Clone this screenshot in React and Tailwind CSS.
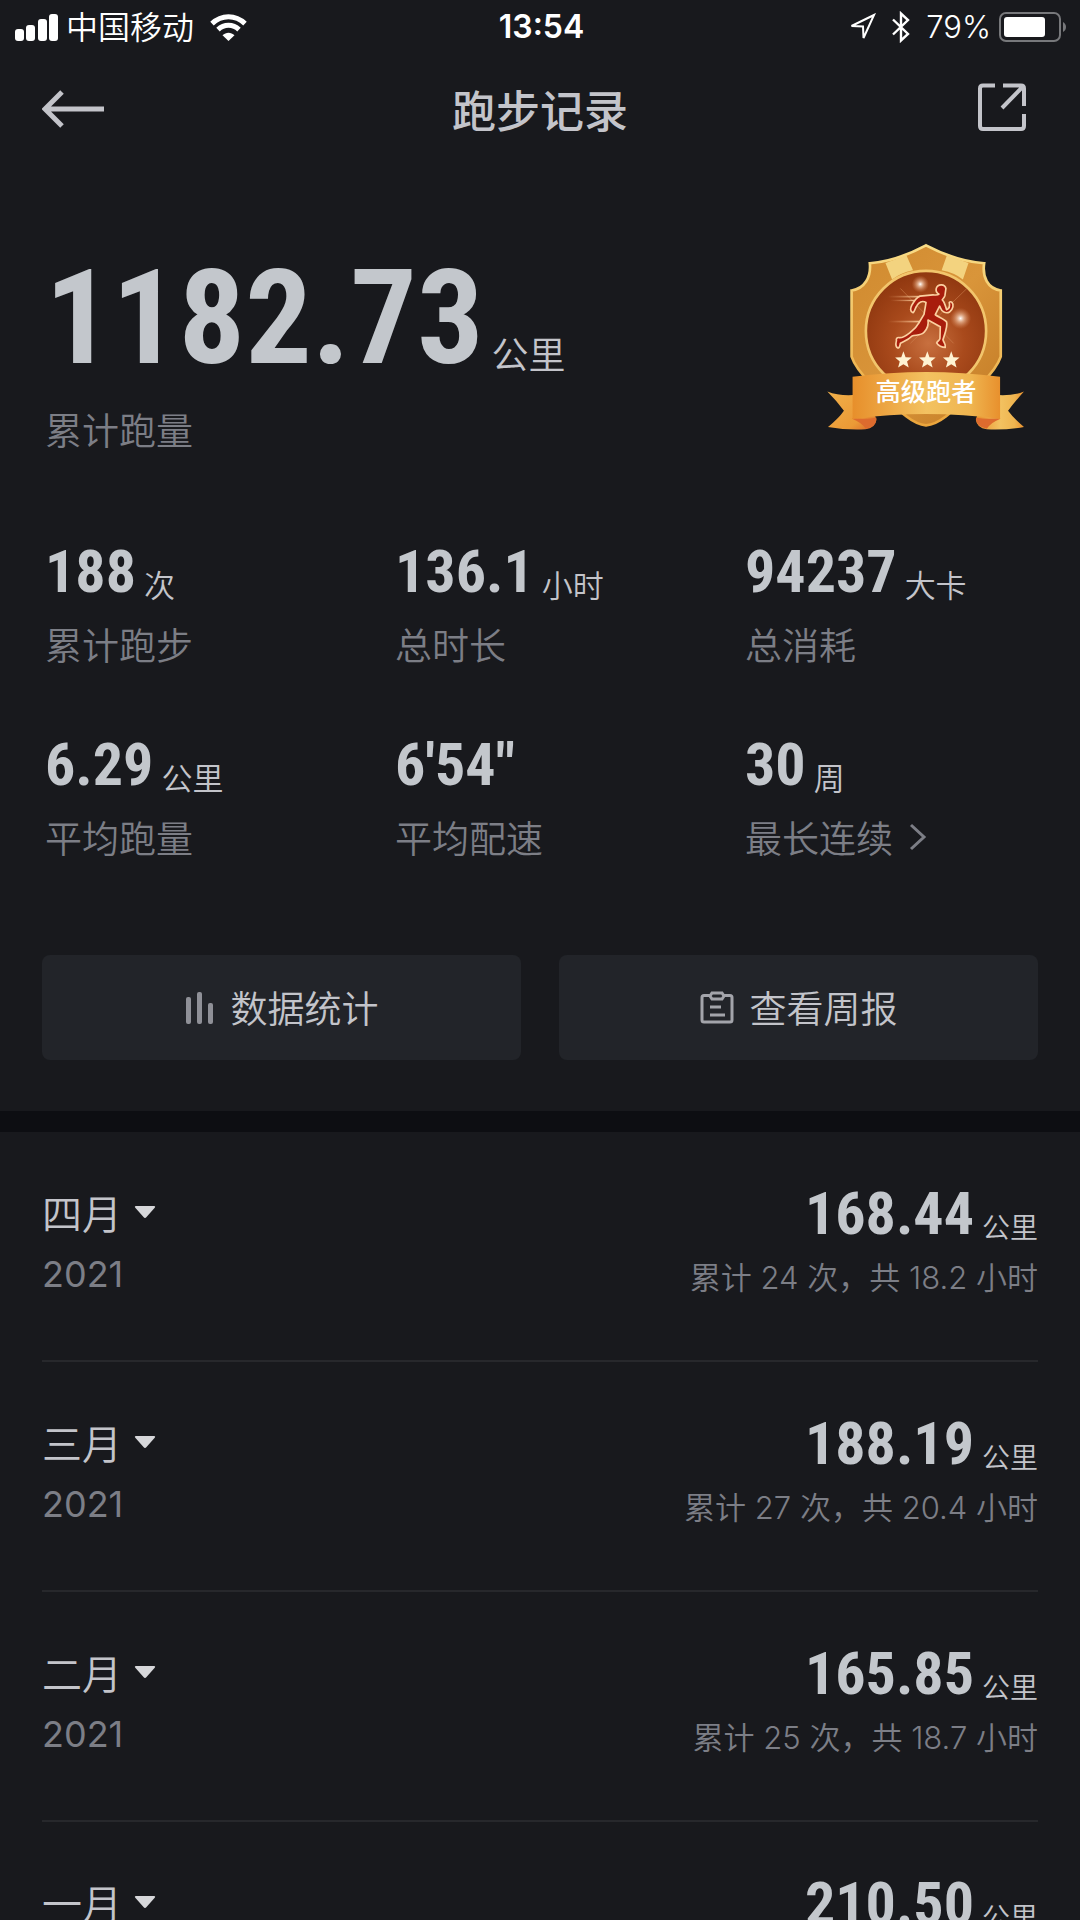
const STATS = [
  { id: 'runs', value: '188', unit: '次', label: '累计跑步' },
  { id: 'time', value: '136.1', unit: '小时', label: '总时长' },
  { id: 'burn', value: '94237', unit: '大卡', label: '总消耗' },
  { id: 'avg', value: '6.29', unit: '公里', label: '平均跑量' },
  { id: 'pace', value: '6′54″', unit: '', label: '平均配速' },
  { id: 'streak', value: '30', unit: '周', label: '最长连续', link: true },
];

const MONTHS = [
  { name: '四月', year: 2021, distance: '168.44', runs: 24, hours: '18.2' },
  { name: '三月', year: 2021, distance: '188.19', runs: 27, hours: '20.4' },
  { name: '二月', year: 2021, distance: '165.85', runs: 25, hours: '18.7' },
  { name: '一月', year: 2021, distance: '210.50' },
];

const NUM = "font-['Roboto_Condensed','Roboto',sans-serif] font-bold text-[#c3c7cc]";
const LABEL = 'text-[37px] leading-[48px] font-[350] text-[#7c7e86]';

function StatusBar() {
  return (
    <div className="grid h-[54px] grid-cols-[1fr_auto_1fr] items-center pr-3 pl-[15px] text-white">
      <div className="flex items-center">
        <svg width="43" height="27" viewBox="0 0 43 27" fill="currentColor">
          <rect x="0" y="15" width="9" height="12" rx="3" />
          <rect x="11" y="11" width="9" height="16" rx="3" />
          <rect x="23" y="5" width="9" height="22" rx="3" />
          <rect x="34" y="0" width="9" height="27" rx="3" />
        </svg>
        <span className="ml-2 pb-1 text-[32px] leading-[40px] font-[350]">中国移动</span>
        <svg className="ml-4" width="37" height="27" viewBox="0 0 37 27" fill="none" stroke="currentColor" strokeWidth="5">
          <path d="M2 9.6C11.500 .4 25.500 .4 35 9.600" />
          <path d="M8 15.600C14 9.900 23 9.900 29 15.600" />
          <path d="M18.500 27L12.500 21.200C16 17.800 21 17.800 24.500 21.200Z" fill="currentColor" stroke="none" />
        </svg>
      </div>
      <span className="font-['Inter'] text-[32px] leading-[40px] font-semibold">13:54</span>
      <div className="flex items-center justify-end">
        <svg width="27" height="28" viewBox="0 0 27 28" fill="none" stroke="currentColor" strokeWidth="2">
          <path d="M25 2L2.500 13L14 13.500L14.500 25Z" strokeLinejoin="miter" />
        </svg>
        <svg className="ml-4" width="18" height="32" viewBox="0 0 18 32" fill="none" stroke="currentColor" strokeWidth="2.400">
          <path d="M1 8.500L16 23L9 29.500V2.500L16 9L1 23.500" />
        </svg>
        <span className="ml-4 font-['Inter'] text-[31px] leading-[40px] font-[350]">79%</span>
        <svg className="ml-2" width="69" height="30" viewBox="0 0 69 30">
          <rect x="1" y="1" width="60" height="28" rx="6" fill="none" stroke="#77787b" strokeWidth="2" />
          <rect x="5" y="5" width="41" height="20" rx="3" fill="#fff" />
          <path d="M64 10C68 12 68 18 64 20Z" fill="#77787b" />
        </svg>
      </div>
    </div>
  );
}

function Header() {
  return (
    <header className="grid h-[110px] grid-cols-[1fr_auto_1fr] items-center px-[42px] text-[#c3c4ca]">
      <button type="button" aria-label="返回" className="justify-self-start">
        <svg width="62" height="38" viewBox="0 0 62 38" fill="none" stroke="currentColor" strokeWidth="5">
          <path d="M20 2L3 19L20 36M3 19H62" />
        </svg>
      </button>
      <h1 className="text-[44px] leading-[60px] font-medium">跑步记录</h1>
      <button type="button" aria-label="分享" className="mr-3 justify-self-end pb-1">
        <svg width="48" height="48" viewBox="0 0 48 48" fill="none" stroke="currentColor" strokeWidth="4" strokeLinejoin="round">
          <path d="M17 2.500H5Q2 2.500 2 5.500V43Q2 46 5 46H43Q46 46 46 43V31" />
          <path d="M25 2.500H43Q46 2.500 46 5.500V23M45 3.500L24 25" />
        </svg>
      </button>
    </header>
  );
}

function Star({ x }) {
  return (
    <path
      transform={`translate(${x} 421)`}
      d="M0-27L6.500-9L25-8L11 3.500L16 22L0 12L-16 22L-11 3.500L-25-8L-6.500-9Z"
      fill="#fff3d2"
    />
  );
}

function Badge() {
  return (
    <svg className="h-[188px] w-[198px]" viewBox="79 69 596 564" role="img" aria-label="高级跑者">
      <defs>
        <linearGradient id="shield" x1="0" y1="0" x2="1" y2="1">
          <stop offset="0" stopColor="#d08a2f" />
          <stop offset=".5" stopColor="#d9953a" />
          <stop offset="1" stopColor="#c27a25" />
        </linearGradient>
        <linearGradient id="rim" x1="0" y1="0" x2="0" y2="1">
          <stop offset="0" stopColor="#f8dc86" />
          <stop offset="1" stopColor="#eba53c" />
        </linearGradient>
        <radialGradient id="disc" cx=".52" cy=".6" r=".6">
          <stop offset="0" stopColor="#c8703f" />
          <stop offset=".5" stopColor="#a94a1c" />
          <stop offset="1" stopColor="#8f370f" />
        </radialGradient>
        <linearGradient id="ribbon" x1="0" y1="0" x2="1" y2="0">
          <stop offset="0" stopColor="#e78f2b" />
          <stop offset=".5" stopColor="#f3c261" />
          <stop offset=".8" stopColor="#efb550" />
          <stop offset="1" stopColor="#e8902d" />
        </linearGradient>
        <linearGradient id="tail" x1="0" y1="0" x2="1" y2="1">
          <stop offset="0" stopColor="#f0b04a" />
          <stop offset=".7" stopColor="#eb9a36" />
          <stop offset="1" stopColor="#d9632a" />
        </linearGradient>
        <radialGradient id="glow">
          <stop offset="0" stopColor="#fff" />
          <stop offset=".35" stopColor="#f3c8a8" stopOpacity=".7" />
          <stop offset="1" stopColor="#d98a5a" stopOpacity="0" />
        </radialGradient>
        <linearGradient id="streak" x1="0" y1="0" x2="1" y2="0">
          <stop offset="0" stopColor="#e8a070" stopOpacity="0" />
          <stop offset="1" stopColor="#ffd9a8" />
        </linearGradient>
      </defs>
      <path
        d="M377 75C425 100 485 125 552 129C546 170 562 205 602 211V410C592 440 570 465 545 490C495 525 440 612 377 617C315 612 260 525 210 490C185 465 163 440 153 410V211C193 205 212 170 208 129C270 125 330 100 377 75Z"
        fill="url(#shield)"
        stroke="url(#rim)"
        strokeWidth="8"
      />
      <path d="M255 128L318 105L338 150Q300 158 275 178Z" fill="#f3d37f" />
      <path d="M505 128L440 105L424 150Q465 158 488 178Z" fill="#f3d37f" />
      <circle cx="377" cy="333" r="181" fill="url(#disc)" stroke="#f2c56c" strokeWidth="8" />
      <path d="M300 205L460 370M500 205L330 370" stroke="#d58a58" strokeWidth="3" opacity=".5" />
      <circle cx="360" cy="192" r="26" fill="url(#glow)" />
      <circle cx="481" cy="295" r="32" fill="url(#glow)" />
      <rect x="262" y="227" width="110" height="5" fill="url(#streak)" />
      <rect x="270" y="239" width="80" height="4" fill="url(#streak)" />
      <rect x="262" y="302" width="108" height="5" fill="url(#streak)" />
      <path
        d="M408 204C413 190 434 191 437 205L434 226C432 234 427 236 426 239C434 246 436 262 439 269C449 265 449 256 447 247C452 241 460 248 458 260C455 274 443 282 431 276C421 272 421 261 418 258L405 284C414 291 434 298 439 306C443 320 433 343 428 359C431 369 438 375 435 382C426 382 413 377 409 369C412 361 418 363 419 355L420 320L383 300C385 311 381 326 371 337C362 348 345 344 335 348C324 360 309 365 300 370C298 377 299 384 292 384C285 381 286 370 288 362C286 355 291 351 297 353C309 354 322 343 331 336C341 328 348 323 354 311L371 283C373 271 376 256 377 247C365 240 355 247 350 256C343 265 344 274 338 278C328 274 330 264 334 256C341 243 347 232 359 228L398 224C405 225 414 224 416 222C409 218 406 211 408 204Z"
        fill="#a81d0c"
        stroke="#fbd0a0"
        strokeWidth="5"
        strokeLinejoin="round"
      />
      <Star x={309} />
      <Star x={381} />
      <Star x={453} />
      <path d="M80 515Q130 535 200 520L228 600Q225 625 195 629Q140 632 82 622Q115 595 130 573Q110 545 80 515Z" fill="url(#tail)" />
      <path d="M672 515Q622 535 552 520L527 600Q530 625 560 629Q615 632 672 622Q640 595 624 573Q645 545 672 515Z" fill="url(#ribbon)" />
      <path d="M156 595Q190 600 228 594Q228 622 196 627Q180 607 156 598Z" fill="#dd6b2e" />
      <path d="M600 595Q565 600 527 594Q528 622 560 627Q575 607 600 598Z" fill="#dd6b2e" />
      <path d="M156 471Q377 441 600 471V598Q377 568 156 598Z" fill="url(#ribbon)" />
      <text x="377" y="543" textAnchor="middle" fontSize="76" fontWeight="500" fill="#fff">高级跑者</text>
    </svg>
  );
}

function Hero() {
  return (
    <section className="flex justify-between pt-[79px] pr-[55px] pl-[45px]">
      <div>
        <div className="flex items-end gap-2">
          <span className={`${NUM} text-[132px] leading-[150px]`}>1182.73</span>
          <span className="pb-4 text-[37px] leading-[48px] font-[350] text-[#c3c4ca]">公里</span>
        </div>
        <p className={`${LABEL} mt-3`}>累计跑量</p>
      </div>
      <Badge />
    </section>
  );
}

function Stat({ stat }) {
  return (
    <div>
      <div className="flex items-end gap-2">
        <span className={`${NUM} text-[60px] leading-[72px]`}>{stat.value}</span>
        {stat.unit && <span className="pb-1 text-[31px] leading-[40px] font-[350] text-[#c3c4ca]">{stat.unit}</span>}
      </div>
      {stat.link ? (
        <button type="button" className={`${LABEL} mt-3 flex items-center gap-4`}>
          {stat.label}
          <svg width="18" height="28" viewBox="0 0 18 28" fill="none" stroke="currentColor" strokeWidth="3">
            <path d="M2 2L15 14L2 26" />
          </svg>
        </button>
      ) : (
        <p className={`${LABEL} mt-3`}>{stat.label}</p>
      )}
    </div>
  );
}

function Actions() {
  const btn = 'flex h-[105px] items-center justify-center gap-4 rounded-lg bg-[#222429] text-[37px] font-[350] text-[#c3c4ca]';
  return (
    <div className="mt-[94px] grid grid-cols-2 gap-[38px] px-[42px]">
      <button type="button" className={btn}>
        <svg width="30" height="34" viewBox="0 0 30 34" fill="#8f9097">
          <rect x="1" y="6" width="5" height="27" rx="2" />
          <rect x="12" y="1" width="5" height="32" rx="2" />
          <rect x="23" y="12" width="5" height="21" rx="2" />
        </svg>
        数据统计
      </button>
      <button type="button" className={btn}>
        <svg width="34" height="34" viewBox="0 0 34 34" fill="none" stroke="#a3a4aa" strokeWidth="3">
          <path d="M10 4.500H4Q2 4.500 2 6.500V29Q2 31 4 31H30Q32 31 32 29V6.500Q32 4.500 30 4.500H24" />
          <path d="M12 2H22L24 5L22 8H12L10 5Z" />
          <path d="M10 16H21M10 24H25" />
        </svg>
        查看周报
      </button>
    </div>
  );
}

function MonthRow({ month }) {
  return (
    <li className="flex h-[230px] justify-between border-b-2 border-[#27282c] pt-[46px]">
      <div className="pt-1">
        <button type="button" className="flex items-center gap-3 text-[40px] leading-[60px] font-[350] text-[#c3c4ca]">
          {month.name}
          <svg width="22" height="14" viewBox="0 0 22 14" fill="#d6d7da">
            <path d="M2 1H20Q22 1 20.500 3L12.500 12Q11 14 9.500 12L1.500 3Q0 1 2 1Z" />
          </svg>
        </button>
        <p className="mt-2 font-['Inter'] text-[36px] leading-[48px] font-normal text-[#7c7e86]">{month.year}</p>
      </div>
      <div className="text-right">
        <div className="flex items-end justify-end gap-2">
          <span className={`${NUM} text-[60px] leading-[72px]`}>{month.distance}</span>
          <span className="pb-1 text-[28px] leading-[40px] font-[350] text-[#c3c4ca]">公里</span>
        </div>
        {month.runs && (
          <p className="mt-2 font-['Inter','Noto_Sans_CJK_SC',sans-serif] text-[31px] leading-[40px] font-[350] text-[#7c7e86]">
            累计 {month.runs} 次，共 {month.hours} 小时
          </p>
        )}
      </div>
    </li>
  );
}

export default function App() {
  return (
    <div className="h-screen overflow-hidden bg-[#18191d] font-['Noto_Sans_CJK_SC',sans-serif]">
      <StatusBar />
      <Header />
      <Hero />
      <section className="mt-[83px] grid grid-cols-[1fr_1fr_335px] gap-y-[61px] pl-[45px]">
        {STATS.map(s => (
          <Stat key={s.id} stat={s} />
        ))}
      </section>
      <Actions />
      <div className="mt-[51px] h-[21px] bg-[#0d0e12]" />
      <ul className="px-[42px]">
        {MONTHS.map(m => (
          <MonthRow key={m.name} month={m} />
        ))}
      </ul>
    </div>
  );
}
